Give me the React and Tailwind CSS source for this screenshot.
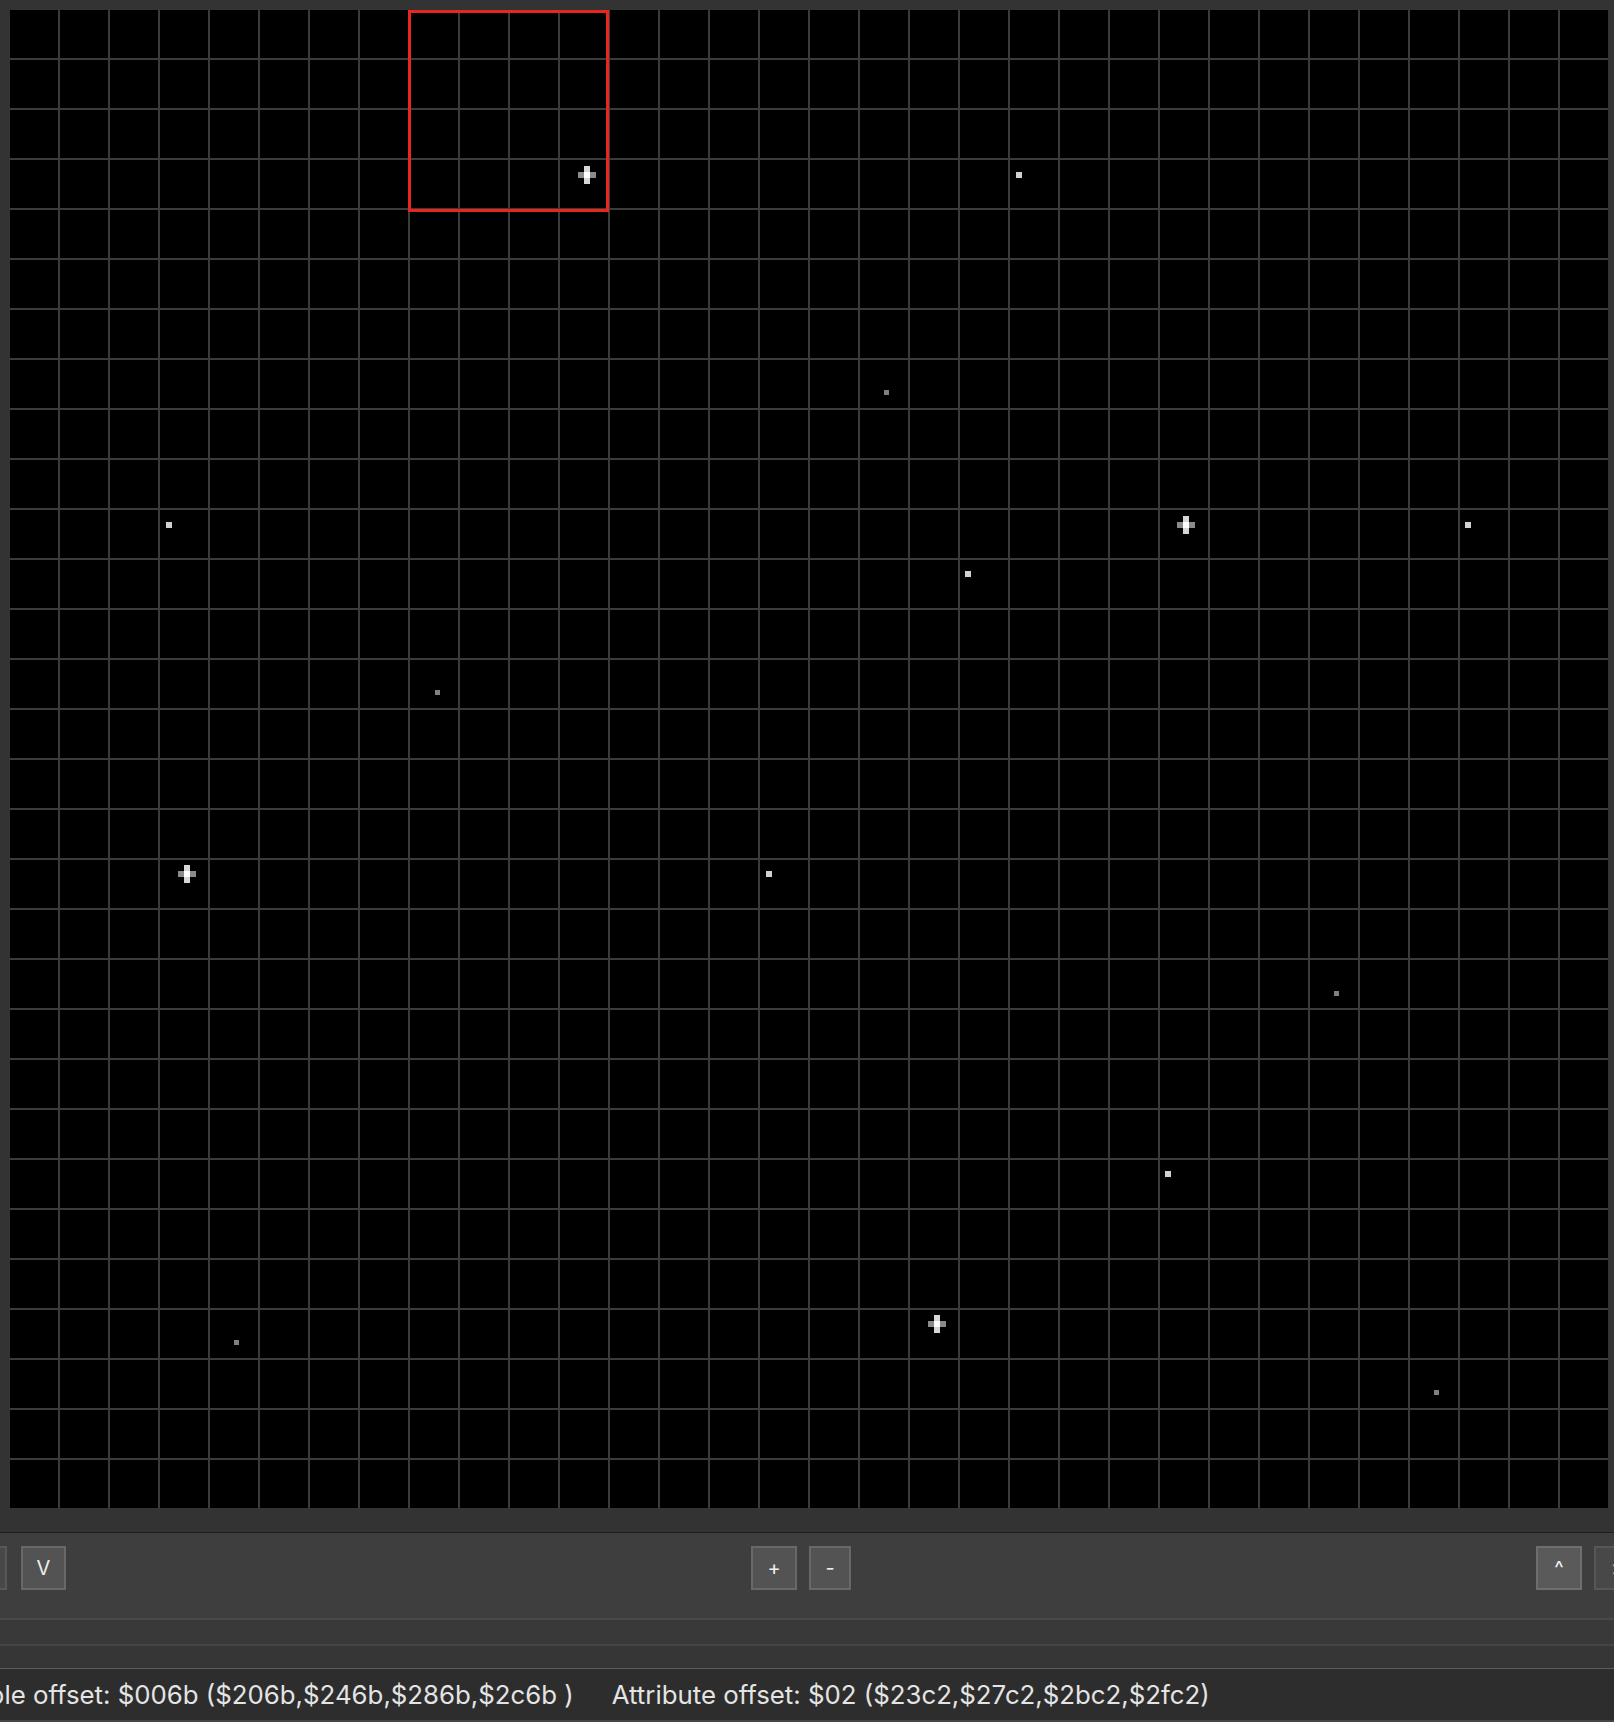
import React from "react";

const CELL = 50;
const CANVAS_W = 1598;
const CANVAS_H = 1498;

// local canvas coords (center of the middle 6px block)
const crosses = [
  [577, 165],
  [1176, 515],
  [177, 864],
  [927, 1314],
];

const dots = [
  { x: 1009, y: 165, dim: false },
  { x: 876, y: 382, dim: true },
  { x: 159, y: 515, dim: false },
  { x: 1458, y: 515, dim: false },
  { x: 958, y: 564, dim: false },
  { x: 427, y: 682, dim: true },
  { x: 759, y: 864, dim: false },
  { x: 1326, y: 983, dim: true },
  { x: 1158, y: 1164, dim: false },
  { x: 226, y: 1332, dim: true },
  { x: 1426, y: 1382, dim: true },
];

const Cross = ({ x, y }) => (
  <g>
    <rect x={x - 9} y={y - 3} width={6} height={6} fill="#8a8a8a" />
    <rect x={x + 3} y={y - 3} width={6} height={6} fill="#8a8a8a" />
    <rect x={x - 3} y={y - 9} width={6} height={6} fill="#d6d6d6" />
    <rect x={x - 3} y={y + 3} width={6} height={6} fill="#d6d6d6" />
    <rect x={x - 3} y={y - 3} width={6} height={6} fill="#ffffff" />
  </g>
);

const StarCanvas = () => {
  const cols = Array.from({ length: 31 }, (_, i) => (i + 1) * CELL - 2);
  const rows = Array.from({ length: 29 }, (_, i) => (i + 1) * CELL - 2);

  return (
    <svg
      width={CANVAS_W}
      height={CANVAS_H}
      viewBox={`0 0 ${CANVAS_W} ${CANVAS_H}`}
      shapeRendering="crispEdges"
      className="block bg-black"
    >
      {cols.map((x) => (
        <rect key={`c${x}`} x={x} y={0} width={2} height={CANVAS_H} fill="#3b3b3b" />
      ))}
      {rows.map((y) => (
        <rect key={`r${y}`} x={0} y={y} width={CANVAS_W} height={2} fill="#3b3b3b" />
      ))}
      {dots.map((d, i) =>
        d.dim ? (
          <rect key={i} x={d.x - 2.5} y={d.y - 2.5} width={5} height={5} fill="#808080" />
        ) : (
          <rect key={i} x={d.x - 3} y={d.y - 3} width={6} height={6} fill="#d0d0d0" />
        )
      )}
      {crosses.map(([x, y], i) => (
        <Cross key={i} x={x} y={y} />
      ))}
      <rect
        x={399.5}
        y={1.5}
        width={198}
        height={199}
        fill="none"
        stroke="#e8261c"
        strokeWidth={3}
      />
    </svg>
  );
};

const ToolButton = ({ label, width, muted, active }) => (
  <button
    className={`h-[44px] ${width} shrink-0 border-2 flex items-center justify-center text-[20px] leading-none ${
      muted
        ? "bg-[#484848] border-[#575757] text-[#9a9a9a]"
        : active
        ? "bg-[#5a5a5a] border-[#6e6e6e] text-[#f0f0f0]"
        : "bg-[#535353] border-[#686868] text-[#eeeeee]"
    }`}
  >
    {label}
  </button>
);

export default function App() {
  return (
    <div
      className="w-[1614px] h-[1722px] overflow-hidden bg-[#333333] flex flex-col"
      style={{ fontFamily: "Inter, 'Noto Sans', sans-serif" }}
    >
      {/* canvas */}
      <div className="pt-[10px] pl-[10px] pb-[24px]">
        <StarCanvas />
      </div>

      {/* toolbar */}
      <div className="border-t border-[#1e1e1e] bg-[#3e3e3e] h-[86px] pt-[13px]">
        <div className="-ml-[38px] w-[1678px] flex justify-between">
          <div className="flex gap-[14px]">
            <ToolButton label="<" width="w-[45px]" muted />
            <ToolButton label="V" width="w-[45px]" />
          </div>
          <div className="flex gap-[12px]">
            <ToolButton label="+" width="w-[46px]" />
            <ToolButton label="-" width="w-[42px]" />
          </div>
          <div className="flex gap-[12px]">
            <ToolButton label="^" width="w-[46px]" active />
            <ToolButton label=">" width="w-[46px]" muted />
          </div>
        </div>
      </div>

      {/* empty strips */}
      <div className="h-[26px] border-t-2 border-[#4a4a4a] bg-[#393939]" />
      <div className="h-[24px] border-t-2 border-[#454545] bg-[#363636]" />

      {/* status */}
      <div className="flex-1 border-t border-[#5c5c5c] border-b-2 border-b-[#454545] bg-[#2d2d2d] flex items-center overflow-hidden">
        <div className="-ml-[106px] flex gap-[38px] whitespace-nowrap text-[25.8px] text-[#e4e4e4] pt-[2px]">
          <span>Nametable offset: $006b ($206b,$246b,$286b,$2c6b )</span>
          <span>Attribute offset: $02 ($23c2,$27c2,$2bc2,$2fc2)</span>
        </div>
      </div>
    </div>
  );
}
